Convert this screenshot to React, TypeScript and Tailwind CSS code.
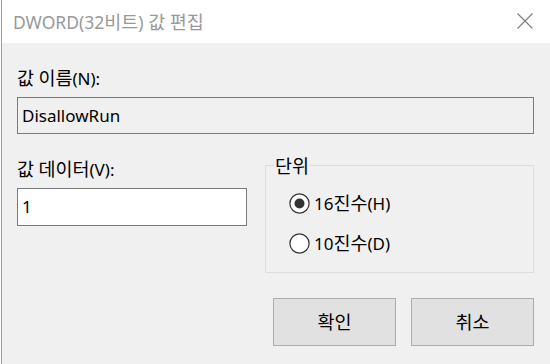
import React from "react";

const font = { fontFamily: '"Noto Sans", "Noto Sans CJK KR", sans-serif' };

function K({ children }: { children: React.ReactNode }) {
  return <span className="text-[18.5px]" style={{ fontFamily: '"Noto Sans CJK KR", sans-serif' }}>{children}</span>;
}

function Radio({ checked, label, k }: { checked: boolean; label: string; k: string }) {
  return (
    <div className="flex items-center h-[24px]">
      <svg width="21" height="21" viewBox="0 0 21 21" className="shrink-0">
        <circle cx="10.5" cy="10.5" r="9.6" fill="#ffffff" stroke="#333333" strokeWidth="1.2" />
        {checked && <circle cx="10.5" cy="10.5" r="5" fill="#333333" />}
      </svg>
      <span className="ml-[4px] text-[17px] text-black leading-[24px]">
        {label}
        <K>진수</K>({k})
      </span>
    </div>
  );
}

export default function App() {
  return (
    <div className="w-[550px] h-[364px] bg-white overflow-hidden flex pl-px" style={font}>
      <div className="flex-1 flex flex-col border-l border-[#9d9d9d]">
        <div className="h-[43px] bg-white flex items-center justify-between pl-[11px] pr-[17px] shrink-0">
          <span className="text-[17.5px] text-[#999999] leading-[24px]">
            DWORD(32<K>비트</K>) <K>값</K> <K>편집</K>
          </span>
          <svg width="16" height="16" viewBox="0 0 16 16" className="mb-[1px]">
            <path d="M0.5 0.5 L15.5 15.5 M15.5 0.5 L0.5 15.5" stroke="#7a7a7a" strokeWidth="1.1" />
          </svg>
        </div>
        <div className="flex-1 bg-[#f0f0f0] pl-[15px] pr-[16px] flex flex-col">
          <div className="mt-[22px] h-[24px] leading-[24px] text-[17px] text-black">
            <K>값</K> <K>이름</K>(N):
          </div>
          <div className="mt-[8px] h-[37px] border border-[#7a7a7a] bg-[#f0f0f0] flex items-center pl-[4px] text-[17px] text-black">
            DisallowRun
          </div>
          <div className="flex items-start">
            <div className="w-[230px] flex flex-col">
              <div className="mt-[22px] h-[24px] leading-[24px] text-[17px] text-black">
                <K>값</K> <K>데이터</K>(V):
              </div>
              <div className="mt-[8px] h-[38px] border border-[#7a7a7a] bg-white flex items-center pl-[4px] text-[17px] text-black">
                1
              </div>
            </div>
            <div className="ml-[18px] mt-[31px] flex-1 h-[108px] border border-[#dcdcdc] relative">
              <span className="absolute left-[8px] top-[-13px] px-[1px] bg-[#f0f0f0] leading-[24px] text-black">
                <K>단위</K>
              </span>
              <div className="pl-[23px] pt-[25px] flex flex-col gap-[16px]">
                <Radio checked label="16" k="H" />
                <Radio checked={false} label="10" k="D" />
              </div>
            </div>
          </div>
          <div className="mt-[25px] flex justify-end gap-[15px]">
            <button className="w-[123px] h-[48px] bg-[#e1e1e1] border border-[#adadad] text-black">
              <K>확인</K>
            </button>
            <button className="w-[123px] h-[48px] bg-[#e1e1e1] border border-[#adadad] text-black">
              <K>취소</K>
            </button>
          </div>
        </div>
      </div>
    </div>
  );
}
